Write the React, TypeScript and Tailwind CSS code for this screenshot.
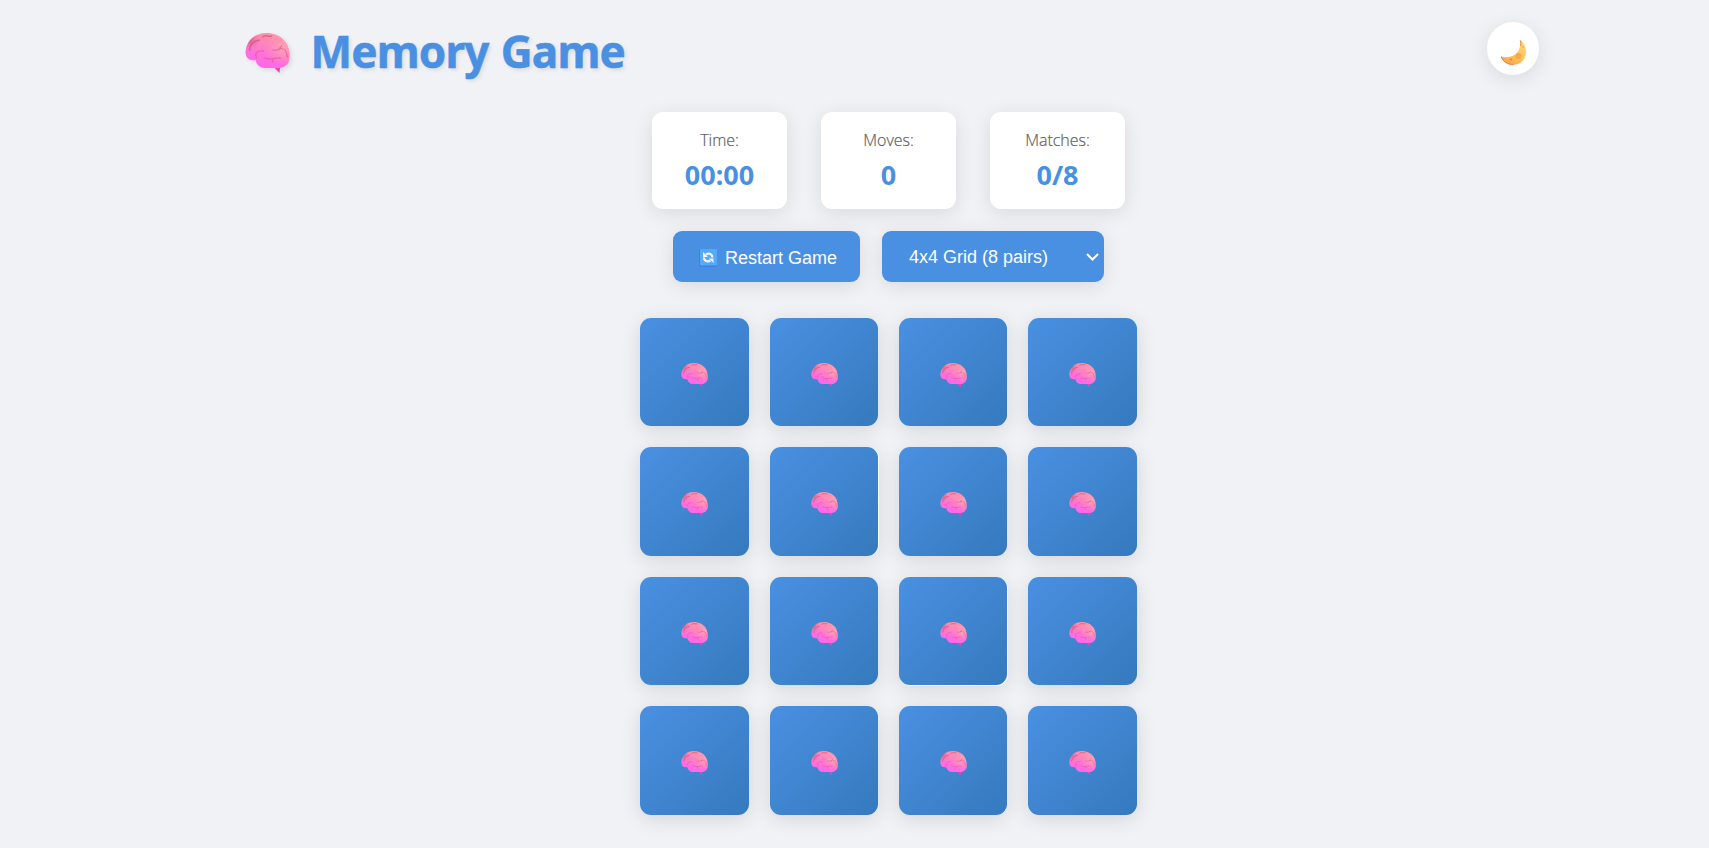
function Brain({ className }: { className?: string }) {
  return (
    <svg viewBox="0 0 44 40" className={className} fill="none" aria-hidden="true">
      <defs>
        <linearGradient id="tissue" x1="28" y1="0" x2="18" y2="34" gradientUnits="userSpaceOnUse">
          <stop stopColor="#ff95a5" />
          <stop offset=".35" stopColor="#ff85bc" />
          <stop offset=".7" stopColor="#ff70dc" />
          <stop offset="1" stopColor="#ff66ea" />
        </linearGradient>
        <radialGradient id="warm" cx="37" cy="15" r="17" gradientUnits="userSpaceOnUse">
          <stop stopColor="#ffa5b4" />
          <stop offset="1" stopColor="#ff8fb8" stopOpacity="0" />
        </radialGradient>
        <radialGradient id="rim" cx="4" cy="7" r="11" gradientUnits="userSpaceOnUse">
          <stop stopColor="#d0608a" />
          <stop offset="1" stopColor="#e878a5" stopOpacity="0" />
        </radialGradient>
      </defs>
      <path d="M26 32 34 40 35 31Z" fill="#f540b4" />
      <path d="M0 19C1 8 9 0 21 0C34 0 44 9 44 22C45 30 40 35 33 35H19C14 35 11 31 10 27C4 28 0 25 0 19Z" fill="url(#tissue)" />
      <path d="M0 19C1 8 9 0 21 0C34 0 44 9 44 22C45 30 40 35 33 35H19C14 35 11 31 10 27C4 28 0 25 0 19Z" fill="url(#warm)" />
      <path d="M0 19C1 8 9 0 21 0C34 0 44 9 44 22C45 30 40 35 33 35H19C14 35 11 31 10 27C4 28 0 25 0 19Z" fill="url(#rim)" />
      <path d="M4 17C4 12 8 8 14 7M17 4C20 1 23 4 26 3" stroke="#cf5280" strokeWidth="1.6" strokeLinecap="round" opacity=".7" />
      <path d="M11 25C9 20 12 17 18 18M27 17C31 19 34 14 38 16C41 17 41 21 42 24M33 17 36 13M19 25C24 28 30 24 35 25M27 26V29" stroke="#e0559a" strokeWidth="1.3" strokeLinecap="round" opacity=".65" />
    </svg>
  );
}

function Moon() {
  return (
    <svg viewBox="0 0 25 25" className="mt-[7px] h-[25px] w-[25px]" aria-hidden="true">
      <defs>
        <linearGradient id="moon" x1="21" y1="3" x2="10" y2="25" gradientUnits="userSpaceOnUse">
          <stop stopColor="#ffd873" />
          <stop offset=".75" stopColor="#fdbb50" />
          <stop offset="1" stopColor="#f8a54a" />
        </linearGradient>
      </defs>
      <path d="M19.300.3C23.500 3 25 7 25 11.500C25 19 20 24.700 12.500 24.700C7 24.700 2 22 .2 16.500C4 17.800 10 17.400 14 14.500C18 11.500 20 6 19.300.3Z" fill="url(#moon)" />
      <path d="M.2 16.500C2 22 7 24.700 12.500 24.700M19.300.3C20 2.500 20 4 19.500 6" stroke="#dc7548" strokeWidth=".9" fill="none" />
      <circle cx="17.500" cy="16" r="2.500" fill="#f8ad48" stroke="#e39c45" strokeWidth=".6" />
      <circle cx="10" cy="19.500" r="1.300" fill="#e59040" />
      <circle cx="22" cy="7" r=".8" fill="#e59a40" />
    </svg>
  );
}

function RestartIcon() {
  return (
    <svg viewBox="0 0 18 18" className="h-[18px] w-[18px]" fill="none" aria-hidden="true">
      <rect width="18" height="18" rx="1.500" fill="#3f80e0" />
      <rect x="1" width="17" height="16.500" rx="1" fill="#58a8fa" />
      <path d="M13.300 8.500C13.300 5 10 3.500 7 5.500M5 8.500C5 12 8.500 13.500 11.500 11.500" stroke="#f0f4ff" strokeWidth="2.200" />
      <path d="M4 3V8H9ZM14.500 14V9.500H10Z" fill="#f0f4ff" />
    </svg>
  );
}

function Stat({ label, value }: { label: string; value: string }) {
  return (
    <div className="flex h-[97px] w-[135px] flex-col items-center rounded-[11px] bg-white pt-[16px] shadow-[0_4px_20px_rgba(0,0,0,0.1)]">
      <span className="font-['Open_Sans','Noto_Sans',sans-serif] text-[16px] leading-[25px] font-light text-[#5c5c5c] [-webkit-text-stroke:0.200px_#666]">{label}</span>
      <span className="mt-[4px] text-[27px] leading-[36px] font-bold text-[#4a90e2]">{value}</span>
    </div>
  );
}

const cards = Array.from({ length: 16 }, (_, i) => i);

function cardEdge(i: number) {
  if (i === 10) return "shadow-[1px_1px_0_#fafcff,0_4px_20px_rgba(0,0,0,0.12)]";
  if (i === 5) return "shadow-[1px_0_0_#fafcff,0_4px_20px_rgba(0,0,0,0.12)]";
  return "shadow-[0_4px_20px_rgba(0,0,0,0.12)]";
}

export default function App() {
  return (
    <div className="h-[848px] overflow-hidden bg-[#f0f2f6] pl-[244px] font-['Noto_Sans','Open_Sans',sans-serif]">
      <header className="flex h-[112px] w-[1295px] items-start justify-between">
        <h1 className="flex pt-[20px] text-[44px] leading-[62px] font-bold tracking-[-0.800px] text-[#4a90e2] [text-shadow:2px_2px_4px_rgba(0,0,0,0.1)] [word-spacing:1.500px]">
          <Brain className="mt-[13px] mr-[21px] ml-[0.500px] h-[40px] w-[45px] drop-shadow-[2px_2px_2px_rgba(0,0,0,0.1)]" />
          <span className="whitespace-nowrap [-webkit-text-stroke:0.500px_#4a90e2]">Memory Game</span>
        </h1>
        <button aria-label="Toggle theme" className="mt-[22px] flex h-[53px] w-[52px] items-center justify-center rounded-full bg-white shadow-[0_4px_20px_rgba(0,0,0,0.1)]">
          <Moon />
        </button>
      </header>
      <main className="flex w-[1289px] flex-col items-center">
        <div className="flex gap-[34px]">
          <Stat label="Time:" value="00:00" />
          <Stat label="Moves:" value="0" />
          <Stat label="Matches:" value="0/8" />
        </div>
        <div className="mt-[22px] flex gap-[22px] font-['Liberation_Sans',Arial,sans-serif] text-[18px] text-white">
          <button className="flex h-[51px] w-[187px] items-center rounded-[9px] bg-[#4a90e2] pt-[3px] pl-[26px] shadow-[0_4px_20px_rgba(0,0,0,0.1)]">
            <RestartIcon />
            <span className="ml-[8px] whitespace-nowrap">Restart Game</span>
          </button>
          <button className="flex h-[51px] w-[222px] items-center justify-between rounded-[9px] bg-[#4a90e2] pt-px pr-[5px] pl-[27px] shadow-[0_4px_20px_rgba(0,0,0,0.1)]">
            <span className="whitespace-nowrap">4x4 Grid (8 pairs)</span>
            <svg viewBox="0 0 13 8" className="h-[8px] w-[13px]" fill="none"><path d="m1 1 5.500 5.500L12 1" stroke="white" strokeWidth="2" /></svg>
          </button>
        </div>
        <div className="mt-[36px] grid grid-cols-[109px_108px_108px_109px] grid-rows-[108px_109px_108px_109px] gap-[21px]">
          {cards.map((i) => (
            <div key={i} className={`flex items-center justify-center rounded-[11px] bg-linear-135 from-[#4a90e2] to-[#357abd] pt-[5px] ${cardEdge(i)}`}>
              <Brain className="h-[24px] w-[27px]" />
            </div>
          ))}
        </div>
      </main>
    </div>
  );
}
